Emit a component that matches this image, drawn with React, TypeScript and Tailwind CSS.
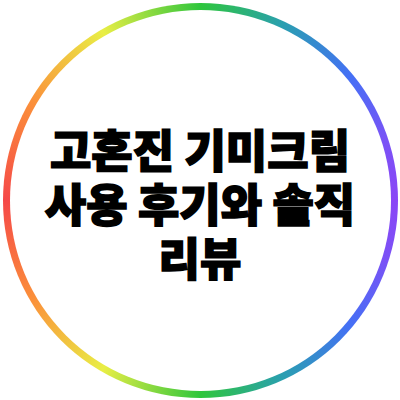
export default function App() {
  const lines = ['고혼진 기미크림', '사용 후기와 솔직', '리뷰'];
  return (
    <div className="w-[400px] h-[400px] bg-white flex items-center justify-center">
      <div className="w-[395px] h-[395px] rounded-full p-[7px] bg-[conic-gradient(from_0deg,#2ec63c,#2a9fb0_25deg,#4470f5_50deg,#7a52f6_72deg,#8a46f6_90deg,#7a52f6_108deg,#4470f5_130deg,#2a9fb0_155deg,#2ec63c_180deg,#e9ee45_210deg,#fb8f3a_240deg,#f54848_270deg,#fb8f3a_300deg,#e9ee45_330deg,#2ec63c_360deg)]">
        <div className="w-full h-full rounded-full bg-white flex flex-col items-center justify-center pt-[6px]">
          {lines.map((l) => (
            <div
              key={l}
              className="text-center text-black text-[45px] leading-[54px] font-black [-webkit-text-stroke:1.5px_black] font-['Noto_Sans_CJK_KR',sans-serif] whitespace-nowrap"
            >
              {l}
            </div>
          ))}
        </div>
      </div>
    </div>
  );
}
